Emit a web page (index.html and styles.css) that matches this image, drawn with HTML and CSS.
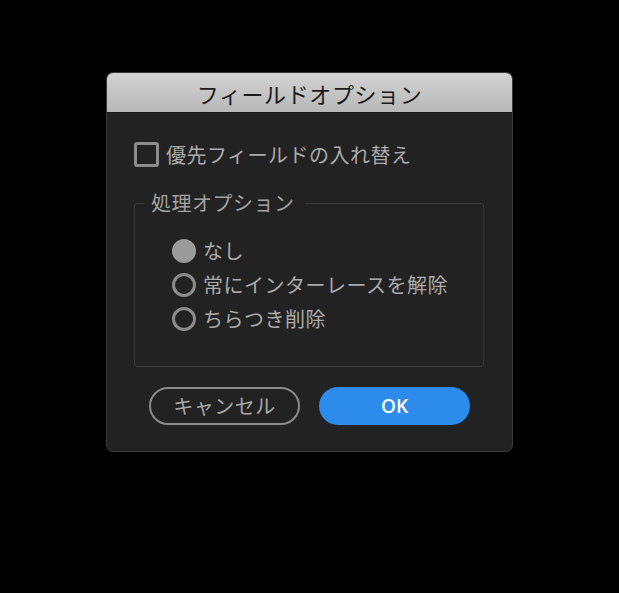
FILE: index.html
```html
<!DOCTYPE html>
<html lang="ja">
<head>
<meta charset="utf-8">
<title>フィールドオプション</title>
<link rel="stylesheet" href="styles.css">
</head>
<body>
<div class="dialog">
  <div class="titlebar">フィールドオプション</div>
  <div class="content">
    <label class="check-row"><span class="checkbox"></span><span class="label">優先フィールドの入れ替え</span></label>
    <fieldset class="group">
      <legend class="legend">処理オプション</legend>
      <div class="radio-list">
        <div class="radio-row"><span class="radio radio-on"></span><span class="label">なし</span></div>
        <div class="radio-row"><span class="radio"></span><span class="label">常にインターレースを解除</span></div>
        <div class="radio-row"><span class="radio"></span><span class="label">ちらつき削除</span></div>
      </div>
    </fieldset>
    <div class="buttons">
      <button class="btn btn-cancel">キャンセル</button>
      <button class="btn btn-ok">OK</button>
    </div>
  </div>
</div>
</body>
</html>
```
FILE: styles.css
```css
* { box-sizing: border-box; }
html, body { margin: 0; padding: 0; }
body {
  background: #000;
  width: 619px;
  height: 593px;
  padding-top: 72px;
  display: flex;
  justify-content: center;
  align-items: flex-start;
  font-family: "Noto Sans CJK JP", "Noto Sans", sans-serif;
}
.dialog {
  width: 407px;
  height: 380px;
  background: #222222;
  border: 1px solid #3a3a3a;
  border-radius: 7px;
  overflow: hidden;
  display: flex;
  flex-direction: column;
}
.titlebar {
  height: 40px;
  flex: none;
  background: linear-gradient(#d3d3d3, #b7b7b7);
  border-bottom: 1px solid #161616;
  color: #1a1a1a;
  font-size: 22px;
  line-height: 40px;
  text-align: center;
  letter-spacing: 0.6px;
}
.content {
  padding: 29px 27px 0 27px;
  display: flex;
  flex-direction: column;
}
.check-row {
  display: flex;
  align-items: center;
  height: 25px;
  gap: 7px;
}
.checkbox {
  width: 25px;
  height: 25px;
  border: 3px solid #8c8c8c;
  border-radius: 3px;
  flex: none;
}
.label {
  color: #ababab;
  font-size: 20px;
  line-height: 24px;
  white-space: nowrap;
  letter-spacing: 0.5px;
}
.group {
  margin: 25px 0 0 0;
  width: 350px;
  border: 1px solid #3b3b3b;
  border-radius: 3px;
  padding: 0 0 30px 0;
}
.legend {
  margin-left: 10px;
  padding: 0 10px 0 6px;
  color: #a3a3a3;
  font-size: 20px;
  line-height: 22px;
  letter-spacing: 0.5px;
}
.radio-list {
  padding: 20px 0 0 37px;
  display: flex;
  flex-direction: column;
}
.radio-row {
  display: flex;
  align-items: center;
  height: 34px;
  gap: 7px;
}
.radio {
  width: 24px;
  height: 24px;
  border-radius: 50%;
  border: 3px solid #8c8c8c;
  flex: none;
}
.radio-on {
  background: #9a9a9a;
  border-color: #9a9a9a;
}
.buttons {
  margin-top: 20px;
  display: flex;
  justify-content: center;
  gap: 19px;
}
.btn {
  width: 151px;
  height: 38px;
  border-radius: 19px;
  font-family: "Noto Sans CJK JP", "Noto Sans", sans-serif;
  font-size: 20px;
  padding: 0;
  line-height: 1;
}
.btn-cancel {
  background: transparent;
  border: 2px solid #8c8c8c;
  color: #a8a8a8;
  letter-spacing: 0.5px;
}
.btn-ok {
  background: #2d8ceb;
  border: none;
  color: #ffffff;
  font-weight: 600;
  font-size: 19px;
  font-family: "Open Sans", "Noto Sans", sans-serif;
}
```
